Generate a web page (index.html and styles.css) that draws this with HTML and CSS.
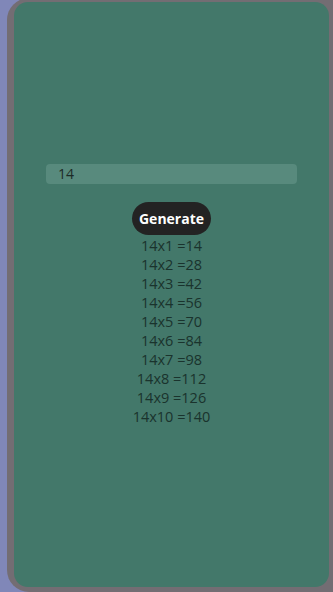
FILE: index.html
```html
<!DOCTYPE html>
<html>
<head>
<meta charset="utf-8">
<link rel="stylesheet" href="styles.css">
</head>
<body>
<div class="frame">
  <div class="card">
    <div class="input">14</div>
    <button class="generate">Generate</button>
    <div class="table">
      <div class="row">14x1 =14</div>
      <div class="row">14x2 =28</div>
      <div class="row">14x3 =42</div>
      <div class="row">14x4 =56</div>
      <div class="row">14x5 =70</div>
      <div class="row">14x6 =84</div>
      <div class="row">14x7 =98</div>
      <div class="row">14x8 =112</div>
      <div class="row">14x9 =126</div>
      <div class="row">14x10 =140</div>
    </div>
  </div>
</div>
</body>
</html>
```
FILE: styles.css
```css
html, body {
  margin: 0;
  padding: 0;
  height: 100%;
  overflow: hidden;
}
body {
  background: #8087b8;
  font-family: "Open Sans", "Noto Sans", sans-serif;
}
.frame {
  box-sizing: border-box;
  margin: -2px 0 0 7px;
  width: 326px;
  height: 594px;
  padding: 4px 4px 5px 7px;
  background: #736d73;
  border-radius: 22px 0 0 22px;
}
.card {
  box-sizing: border-box;
  width: 315px;
  height: 585px;
  background: #43786a;
  border-radius: 14px;
  padding: 162px 32px 0;
  display: flex;
  flex-direction: column;
  align-items: center;
}
.input {
  align-self: stretch;
  box-sizing: border-box;
  height: 20px;
  padding-left: 12px;
  background: #588a7d;
  border-radius: 4px;
  color: #1c2a26;
  font-size: 14px;
  line-height: 20px;
}
.generate {
  margin-top: 18px;
  height: 33px;
  padding: 0 7px;
  border: none;
  border-radius: 17px;
  background: #232323;
  color: #fff;
  font-family: "Open Sans", sans-serif;
  font-weight: 700;
  font-size: 14px;
}
.table {
  margin-top: 1px;
  display: flex;
  flex-direction: column;
  align-items: center;
}
.row {
  color: #1a332d;
  font-size: 14.5px;
  line-height: 19px;
}
```
